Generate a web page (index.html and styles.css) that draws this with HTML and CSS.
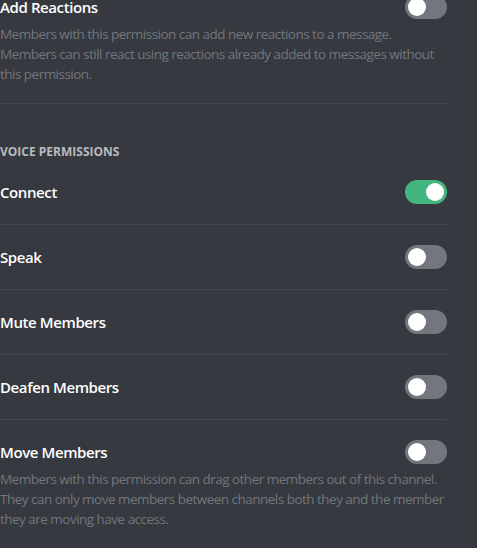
FILE: index.html
```html
<!DOCTYPE html>
<html>
<head>
<meta charset="utf-8">
<link rel="stylesheet" href="styles.css">
</head>
<body>
<div class="panel">
  <div class="perm first">
    <div class="row">
      <div class="title">Add Reactions</div>
      <div class="toggle"><span class="knob"></span></div>
    </div>
    <div class="desc">Members with this permission can add new reactions to a message. Members can still react using reactions already added to messages without this permission.</div>
  </div>

  <div class="section-header">Voice Permissions</div>

  <div class="perm">
    <div class="row">
      <div class="title">Connect</div>
      <div class="toggle on"><span class="knob"></span></div>
    </div>
  </div>
  <div class="perm">
    <div class="row">
      <div class="title">Speak</div>
      <div class="toggle"><span class="knob"></span></div>
    </div>
  </div>
  <div class="perm">
    <div class="row">
      <div class="title">Mute Members</div>
      <div class="toggle"><span class="knob"></span></div>
    </div>
  </div>
  <div class="perm">
    <div class="row">
      <div class="title">Deafen Members</div>
      <div class="toggle"><span class="knob"></span></div>
    </div>
  </div>
  <div class="perm last">
    <div class="row">
      <div class="title">Move Members</div>
      <div class="toggle"><span class="knob"></span></div>
    </div>
    <div class="desc">Members with this permission can drag other members out of this channel. They can only move members between channels both they and the member they are moving have access.</div>
  </div>
</div>
</body>
</html>
```
FILE: styles.css
```css
html, body {
  margin: 0;
  padding: 0;
  background: #36393f;
  height: 100%;
  overflow: hidden;
}
body {
  font-family: "Open Sans", "Noto Sans", sans-serif;
}
.panel {
  width: 447px;
  margin-top: -5px;
}
.perm {
  padding-top: 20px;
  padding-bottom: 20px;
  border-bottom: 1px solid #42454b;
}
.perm.first {
  padding-top: 0;
  padding-bottom: 19px;
}
.perm.last {
  border-bottom: none;
}
.row {
  display: flex;
  align-items: center;
  justify-content: space-between;
  height: 24px;
}
.title {
  color: #ffffff;
  font-size: 15px;
  font-weight: 600;
  line-height: 20px;
  letter-spacing: -0.4px;
}
.desc {
  margin-top: 5px;
  color: #72767d;
  font-size: 13.5px;
  line-height: 20px;
  letter-spacing: -0.52px;
}
.section-header {
  margin-top: 40px;
  color: #b9bbbe;
  font-size: 12px;
  font-weight: 700;
  line-height: 16px;
  text-transform: uppercase;
  letter-spacing: 0;
}
.toggle {
  position: relative;
  width: 42px;
  height: 24px;
  border-radius: 12px;
  background: #72767d;
  flex-shrink: 0;
}
.toggle.on {
  background: #43b581;
}
.knob {
  position: absolute;
  top: 3px;
  left: 3px;
  width: 18px;
  height: 18px;
  border-radius: 50%;
  background: #ffffff;
}
.toggle.on .knob {
  left: 21px;
}
```
